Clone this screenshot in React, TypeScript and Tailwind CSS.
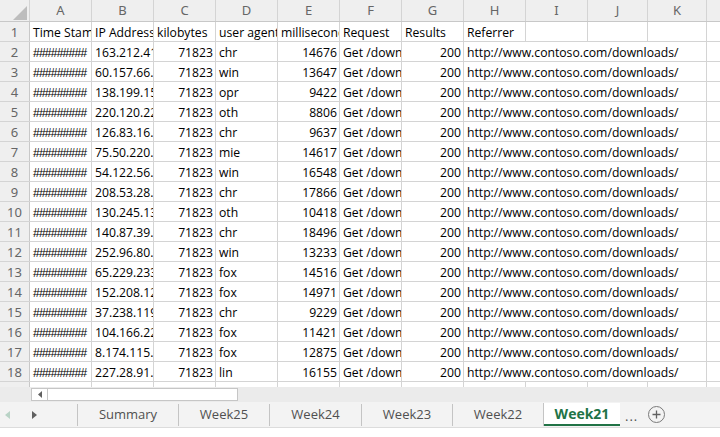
import React from 'react';

const colWidths = [62, 62, 62, 62, 62, 62, 62, 62, 62, 60, 59, 40];
const letters = ['A', 'B', 'C', 'D', 'E', 'F', 'G', 'H', 'I', 'J', 'K', 'L'];

const rows: [string, string, string, number][] = [
  ['163.212.41.19', 'chr', '14676', 2],
  ['60.157.66.201', 'win', '13647', 3],
  ['138.199.15.44', 'opr', '9422', 4],
  ['220.120.22.71', 'oth', '8806', 5],
  ['126.83.16.210', 'chr', '9637', 6],
  ['75.50.220.118', 'mie', '14617', 7],
  ['54.122.56.190', 'win', '16548', 8],
  ['208.53.28.166', 'chr', '17866', 9],
  ['130.245.13.97', 'oth', '10418', 10],
  ['140.87.39.152', 'chr', '18496', 11],
  ['252.96.80.233', 'win', '13233', 12],
  ['65.229.233.14', 'fox', '14516', 13],
  ['152.208.12.75', 'fox', '14971', 14],
  ['37.238.119.50', 'chr', '9229', 15],
  ['104.166.22.81', 'fox', '11421', 16],
  ['8.174.115.203', 'fox', '12875', 17],
  ['227.28.91.142', 'lin', '16155', 18],
];

const cellBase =
  'shrink-0 h-full overflow-hidden whitespace-nowrap border-r border-[#d4d4d4] text-[12.2px] pt-px leading-[19px] text-black';

function Cell({ w, children, right }: { w: number; children?: React.ReactNode; right?: boolean }) {
  return (
    <div
      className={`${cellBase} ${right ? 'text-right pr-[2px]' : 'pl-[3px]'}`}
      style={{ width: w }}
    >
      {children}
    </div>
  );
}

function RowHead({ n }: { n: number | string }) {
  return (
    <div className="shrink-0 w-[30px] h-full bg-[#efefef] border-r border-[#c8c8c8] text-center text-[13px] leading-[20px] text-[#666] font-['Noto_Sans',sans-serif]">
      {n}
    </div>
  );
}

function Tab({ label, w }: { label: string; w: number }) {
  return (
    <div className="flex items-center shrink-0" style={{ width: w }}>
      <span className="w-px h-[22px] bg-[#c4c4c4]" />
      <span className="flex-1 text-center text-[13px] text-[#505050]">{label}</span>
    </div>
  );
}

export default function App() {
  return (
    <div className="w-[720px] h-[437px] overflow-hidden bg-white flex flex-col font-['Open_Sans',sans-serif]">
      <div className="h-[387px] overflow-hidden">
        {/* column headers */}
        <div className="flex h-[22px] bg-[#efefef] border-b border-[#c8c8c8]">
          <div className="relative shrink-0 w-[30px] h-full border-r border-[#d4d4d4]">
            <svg className="absolute left-[13px] top-[6px]" width="14" height="14" viewBox="0 0 14 14">
              <polygon points="14,0 14,14 0,14" fill="#bdbdbd" />
            </svg>
          </div>
          {colWidths.map((w, i) => (
            <div
              key={i}
              className="shrink-0 h-full border-r border-[#d4d4d4] text-center text-[13px] leading-[21px] text-[#666] font-['Noto_Sans',sans-serif]"
              style={{ width: w }}
            >
              {letters[i]}
            </div>
          ))}
        </div>

        {/* row 1 */}
        <div className="flex h-[20px] border-b border-[#d4d4d4]">
          <RowHead n={1} />
          <Cell w={62}>Time Stamp</Cell>
          <Cell w={62}>IP Address</Cell>
          <Cell w={62}>kilobytes</Cell>
          <Cell w={62}>user agent</Cell>
          <Cell w={62}>milliseconds</Cell>
          <Cell w={62}>Request</Cell>
          <Cell w={62}>Results</Cell>
          <Cell w={62}>Referrer</Cell>
          <Cell w={62} />
          <Cell w={60} />
          <Cell w={59} />
          <Cell w={40} />
        </div>

        {rows.map(([ip, ua, ms, n]) => (
          <div key={n} className="flex h-[20px] border-b border-[#d4d4d4]">
            <RowHead n={n} />
            <Cell w={62}>
              <span className="font-['Liberation_Sans',sans-serif] text-[12px] tracking-[-0.75px]">#########</span>
            </Cell>
            <Cell w={62}>{ip}</Cell>
            <Cell w={62} right>
              71823
            </Cell>
            <Cell w={62}>{ua}</Cell>
            <Cell w={62} right>
              {ms}
            </Cell>
            <Cell w={62}>Get /downloads/</Cell>
            <Cell w={62} right>
              200
            </Cell>
            <Cell w={243}>http://www.contoso.com/downloads/</Cell>
            <Cell w={40} />
          </div>
        ))}

        {/* row 19, partly hidden */}
        <div className="flex h-[20px]">
          <RowHead n={19} />
          {colWidths.map((w, i) => (
            <Cell key={i} w={w} />
          ))}
        </div>
      </div>

      {/* horizontal scroll strip */}
      <div className="h-[15px] bg-[#ebebeb] flex items-start pt-px">
        <div className="ml-[31px] h-[13px] w-[17px] bg-white border border-[#c6c6c6] flex items-center justify-center">
          <svg width="4" height="7" viewBox="0 0 4 7">
            <polygon points="4,0 4,7 0,3.5" fill="#606060" />
          </svg>
        </div>
        <div className="h-[13px] w-[190px] bg-white border border-l-0 border-[#c6c6c6]" />
      </div>

      {/* sheet tabs */}
      <div className="h-[26px] bg-[#f3f3f3] border-b border-[#dcdcdc] flex items-center">
        <div className="w-[77px] shrink-0 flex items-center h-full">
          <svg className="ml-[5px]" width="5" height="8" viewBox="0 0 5 8">
            <polygon points="5,0 5,8 0,4" fill="#b9d3c6" />
          </svg>
          <svg className="ml-[22px]" width="5" height="8" viewBox="0 0 5 8">
            <polygon points="0,0 0,8 5,4" fill="#606060" />
          </svg>
        </div>
        <Tab label="Summary" w={101} />
        <Tab label="Week25" w={91} />
        <Tab label="Week24" w={92} />
        <Tab label="Week23" w={91} />
        <Tab label="Week22" w={91} />
        <div className="w-[77px] h-full flex shrink-0 pt-px">
          <span className="w-px h-[23px] bg-[#c4c4c4]" />
          <div className="flex-1 h-[23px] bg-white border-b-2 border-[#217346] flex items-center justify-center text-[14px] font-bold text-[#217346]">
            Week21
          </div>
        </div>
        <span className="ml-[5px] text-[13px] text-[#505050] tracking-[1px] leading-none mt-[4px]">...</span>
        <div className="ml-[10px] w-[17px] h-[17px] rounded-full border border-[#7a7a7a] flex items-center justify-center">
          <svg width="9" height="9" viewBox="0 0 9 9">
            <path d="M4.5 0.5v8M0.5 4.5h8" stroke="#606060" strokeWidth="1.3" />
          </svg>
        </div>
      </div>
      <div className="flex-1 bg-white" />
    </div>
  );
}
